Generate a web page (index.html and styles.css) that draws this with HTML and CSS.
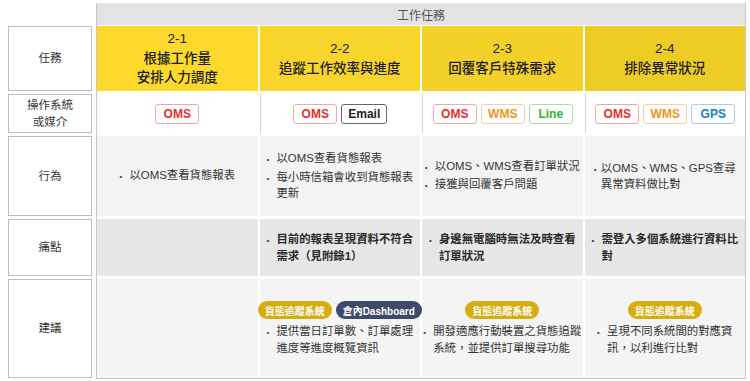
FILE: index.html
```html
<!DOCTYPE html>
<html lang="zh-Hant">
<head>
<meta charset="utf-8">
<title>工作任務</title>
<link rel="stylesheet" href="styles.css">
</head>
<body>
<div class="page">
  <div class="labels">
    <div class="label">任務</div>
    <div class="label">操作系統<br>或媒介</div>
    <div class="label">行為</div>
    <div class="label">痛點</div>
    <div class="label">建議</div>
  </div>
  <div class="main">
    <div class="main-head">工作任務</div>
    <div class="grid">
      <div class="cell task t1">2-1<br>根據工作量<br>安排人力調度</div>
      <div class="cell task t2">2-2<br>追蹤工作效率與進度</div>
      <div class="cell task t3">2-3<br>回覆客戶特殊需求</div>
      <div class="cell task t4">2-4<br>排除異常狀況</div>

      <div class="cell sys first"><span class="tag oms">OMS</span></div>
      <div class="cell sys"><span class="tag oms">OMS</span><span class="tag email">Email</span></div>
      <div class="cell sys"><span class="tag oms">OMS</span><span class="tag wms">WMS</span><span class="tag line">Line</span></div>
      <div class="cell sys"><span class="tag oms">OMS</span><span class="tag wms">WMS</span><span class="tag gps">GPS</span></div>

      <div class="cell act">
        <ul class="items"><li>以OMS查看貨態報表</li></ul>
      </div>
      <div class="cell act">
        <ul class="items"><li>以OMS查看貨態報表</li><li>每小時信箱會收到貨態報表<br>更新</li></ul>
      </div>
      <div class="cell act">
        <ul class="items"><li>以OMS、WMS查看訂單狀況</li><li>接獲與回覆客戶問題</li></ul>
      </div>
      <div class="cell act">
        <ul class="items tight"><li>以OMS、WMS、GPS查尋<br>異常資料做比對</li></ul>
      </div>

      <div class="cell pain"></div>
      <div class="cell pain">
        <ul class="items bold"><li>目前的報表呈現資料不符合<br>需求（見附錄1）</li></ul>
      </div>
      <div class="cell pain">
        <ul class="items bold"><li>身邊無電腦時無法及時查看<br>訂單狀況</li></ul>
      </div>
      <div class="cell pain">
        <ul class="items bold"><li>需登入多個系統進行資料比<br>對</li></ul>
      </div>

      <div class="cell sugg"></div>
      <div class="cell sugg">
        <div class="pills"><span class="pill gold">貨態追蹤系統</span><span class="pill navy">倉內Dashboard</span></div>
        <ul class="items"><li>提供當日訂單數、訂單處理<br>進度等進度概覽資訊</li></ul>
      </div>
      <div class="cell sugg">
        <div class="pills"><span class="pill gold">貨態追蹤系統</span></div>
        <ul class="items"><li>開發適應行動裝置之貨態追蹤<br>系統，並提供訂單搜尋功能</li></ul>
      </div>
      <div class="cell sugg">
        <div class="pills"><span class="pill gold">貨態追蹤系統</span></div>
        <ul class="items"><li>呈現不同系統間的對應資<br>訊，以利進行比對</li></ul>
      </div>
    </div>
  </div>
</div>
</body>
</html>
```
FILE: styles.css
```css
* { box-sizing: border-box; }
html, body { margin: 0; padding: 0; }
body {
  width: 750px;
  height: 381px;
  overflow: hidden;
  background: #fff;
  color: #333;
  font-family: "Liberation Sans", "Noto Sans CJK TC", sans-serif;
}
.page {
  display: flex;
  gap: 4px;
  padding: 3px 4px 0 8px;
}
.labels {
  width: 84px;
  flex: none;
  display: grid;
  grid-template-rows: 65px 39px 80px 57px 99px;
  row-gap: 3px;
  padding-top: 23px;
}
.label {
  border: 1px solid #bdbdbd;
  display: flex;
  align-items: center;
  justify-content: center;
  text-align: center;
  font-size: 11.5px;
  line-height: 17px;
  color: #333;
}
.main {
  flex: 1;
  border: 1px solid #c8c8c8;
  border-top: none;
}
.main-head {
  height: 22px;
  background: #e3e3e3;
  margin-bottom: 1px;
  display: flex;
  align-items: center;
  justify-content: center;
  font-size: 12px;
  color: #555;
}
.grid {
  display: grid;
  grid-template-columns: repeat(4, 1fr);
  grid-template-rows: 65px 39px 80px 57px 99px;
  column-gap: 2px;
  row-gap: 3px;
}
.cell {
  display: flex;
  align-items: center;
  justify-content: center;
  min-width: 0;
}
.task {
  text-align: center;
  font-size: 13.5px;
  line-height: 19.5px;
  font-weight: 500;
  color: #1e1e1e;
}
.t1 { background: #fdd92b; }
.t2 { background: #f8d52a; }
.t3 { background: #f3d128; }
.t4 { background: #eecc26; }

.sys {
  background: #fff;
  gap: 4px;
  border-left: 1px solid #d4d4d4;
}
.sys.first { border-left: none; }
.tag {
  height: 20px;
  min-width: 44px;
  padding: 0 6px;
  border: 1px solid;
  border-radius: 3px;
  display: inline-flex;
  align-items: center;
  justify-content: center;
  font-size: 12px;
  font-weight: 700;
}
.oms { border-color: #f2a6a6; color: #e53130; }
.email { border-color: #666; color: #222; }
.wms { border-color: #f8cfa2; color: #f29322; }
.line { border-color: #a7dea7; color: #34b234; }
.gps { border-color: #a6cbe8; color: #1b7cc1; }

.act { background: #f3f3f3; }
.pain { background: #e7e7e7; }
.sugg {
  background: #f4f4f4;
  flex-direction: column;
}

.items {
  list-style: none;
  margin: 0;
  padding: 0;
  display: flex;
  flex-direction: column;
  font-size: 11.4px;
  line-height: 16.5px;
  color: #333;
}
.items li {
  display: flex;
  align-items: baseline;
  white-space: nowrap;
}
.items li::before {
  content: "•";
  flex: none;
  width: 10px;
  font-size: 8px;
  color: #444;
}
.items.tight li::before { width: 7px; }
.items.bold { font-weight: 700; color: #2a2a2a; }

.pills {
  display: flex;
  flex: none;
  gap: 4px;
  margin-bottom: 4px;
  white-space: nowrap;
}
.pill {
  flex: none;
  height: 18px;
  padding: 0 7px;
  border-radius: 9px;
  display: inline-flex;
  align-items: center;
  font-size: 10px;
  font-weight: 700;
  color: #fff;
  white-space: nowrap;
}
.gold { background: #d7ad12; }
.navy { background: #3e4a69; }
```
